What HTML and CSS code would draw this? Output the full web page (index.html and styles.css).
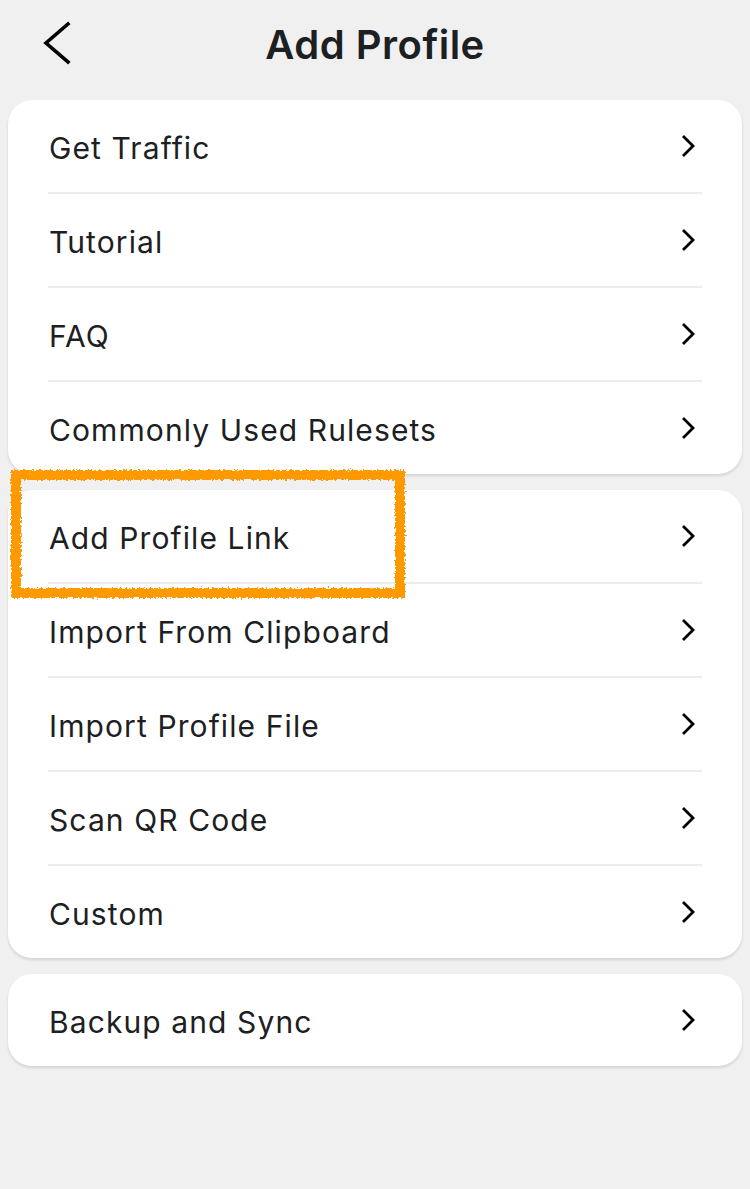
FILE: index.html
```html
<!DOCTYPE html>
<html>
<head>
<meta charset="utf-8">
<link rel="stylesheet" href="styles.css">
</head>
<body>
<div class="page">
  <header class="header">
    <svg class="back" width="30" height="44" viewBox="0 0 30 44"><polyline points="26,3 4,22 26,41" fill="none" stroke="#000" stroke-width="3.6" stroke-linecap="square"/></svg>
    <h1 class="title">Add Profile</h1>
  </header>
  <section class="card">
    <div class="row"><span class="label">Get Traffic</span><svg class="chev" width="14" height="24" viewBox="0 0 14 24"><polyline points="2,2 12,12 2,22" fill="none" stroke="#000" stroke-width="2.8"/></svg></div>
    <div class="row"><span class="label">Tutorial</span><svg class="chev" width="14" height="24" viewBox="0 0 14 24"><polyline points="2,2 12,12 2,22" fill="none" stroke="#000" stroke-width="2.8"/></svg></div>
    <div class="row"><span class="label">FAQ</span><svg class="chev" width="14" height="24" viewBox="0 0 14 24"><polyline points="2,2 12,12 2,22" fill="none" stroke="#000" stroke-width="2.8"/></svg></div>
    <div class="row"><span class="label">Commonly Used Rulesets</span><svg class="chev" width="14" height="24" viewBox="0 0 14 24"><polyline points="2,2 12,12 2,22" fill="none" stroke="#000" stroke-width="2.8"/></svg></div>
  </section>
  <section class="card">
    <div class="row"><span class="label">Add Profile Link</span><svg class="chev" width="14" height="24" viewBox="0 0 14 24"><polyline points="2,2 12,12 2,22" fill="none" stroke="#000" stroke-width="2.8"/></svg></div>
    <div class="row"><span class="label">Import From Clipboard</span><svg class="chev" width="14" height="24" viewBox="0 0 14 24"><polyline points="2,2 12,12 2,22" fill="none" stroke="#000" stroke-width="2.8"/></svg></div>
    <div class="row"><span class="label">Import Profile File</span><svg class="chev" width="14" height="24" viewBox="0 0 14 24"><polyline points="2,2 12,12 2,22" fill="none" stroke="#000" stroke-width="2.8"/></svg></div>
    <div class="row"><span class="label">Scan QR Code</span><svg class="chev" width="14" height="24" viewBox="0 0 14 24"><polyline points="2,2 12,12 2,22" fill="none" stroke="#000" stroke-width="2.8"/></svg></div>
    <div class="row"><span class="label">Custom</span><svg class="chev" width="14" height="24" viewBox="0 0 14 24"><polyline points="2,2 12,12 2,22" fill="none" stroke="#000" stroke-width="2.8"/></svg></div>
  </section>
  <section class="card">
    <div class="row"><span class="label">Backup and Sync</span><svg class="chev" width="14" height="24" viewBox="0 0 14 24"><polyline points="2,2 12,12 2,22" fill="none" stroke="#000" stroke-width="2.8"/></svg></div>
  </section>
  <svg class="highlight" width="410" height="140" viewBox="0 0 410 140">
    <defs>
      <filter id="rough" x="-5%" y="-10%" width="110%" height="120%">
        <feTurbulence type="fractalNoise" baseFrequency="0.45" numOctaves="2" seed="3"/>
        <feDisplacementMap in="SourceGraphic" scale="5"/>
      </filter>
    </defs>
    <rect x="8" y="7" width="384" height="118" fill="none" stroke="#ff9900" stroke-width="10" filter="url(#rough)"/>
  </svg>
</div>
</body>
</html>
```
FILE: styles.css
```css
html, body {
  margin: 0;
  padding: 0;
  background: #f0f0f0;
}
.page {
  position: relative;
  width: 750px;
  min-height: 1189px;
  padding: 0 8px;
  box-sizing: border-box;
  font-family: Inter, "Noto Sans", sans-serif;
  color: #1c2022;
}
.header {
  position: relative;
  height: 100px;
  display: flex;
  align-items: center;
  justify-content: center;
}
.back {
  position: absolute;
  left: 34px;
  top: 21px;
}
.title {
  margin: 0 0 12px 0;
  font-size: 40px;
  font-weight: 600;
  letter-spacing: 0.5px;
  color: #1c2022;
}
.card {
  background: #fff;
  border-radius: 24px;
  box-shadow: 0 2px 3px rgba(0,0,0,0.12);
  margin-bottom: 16px;
  padding: 0 40px;
}
.row {
  height: 92px;
  display: flex;
  align-items: center;
  justify-content: space-between;
  border-bottom: 2px solid #ededed;
}
.row:last-child {
  border-bottom: none;
}
.label {
  font-size: 30px;
  letter-spacing: 1.1px;
  padding-left: 1px;
  padding-top: 4px;
}
.chev {
  display: block;
  margin-right: 7px;
}
.highlight {
  position: absolute;
  left: 8px;
  top: 468px;
}
```
